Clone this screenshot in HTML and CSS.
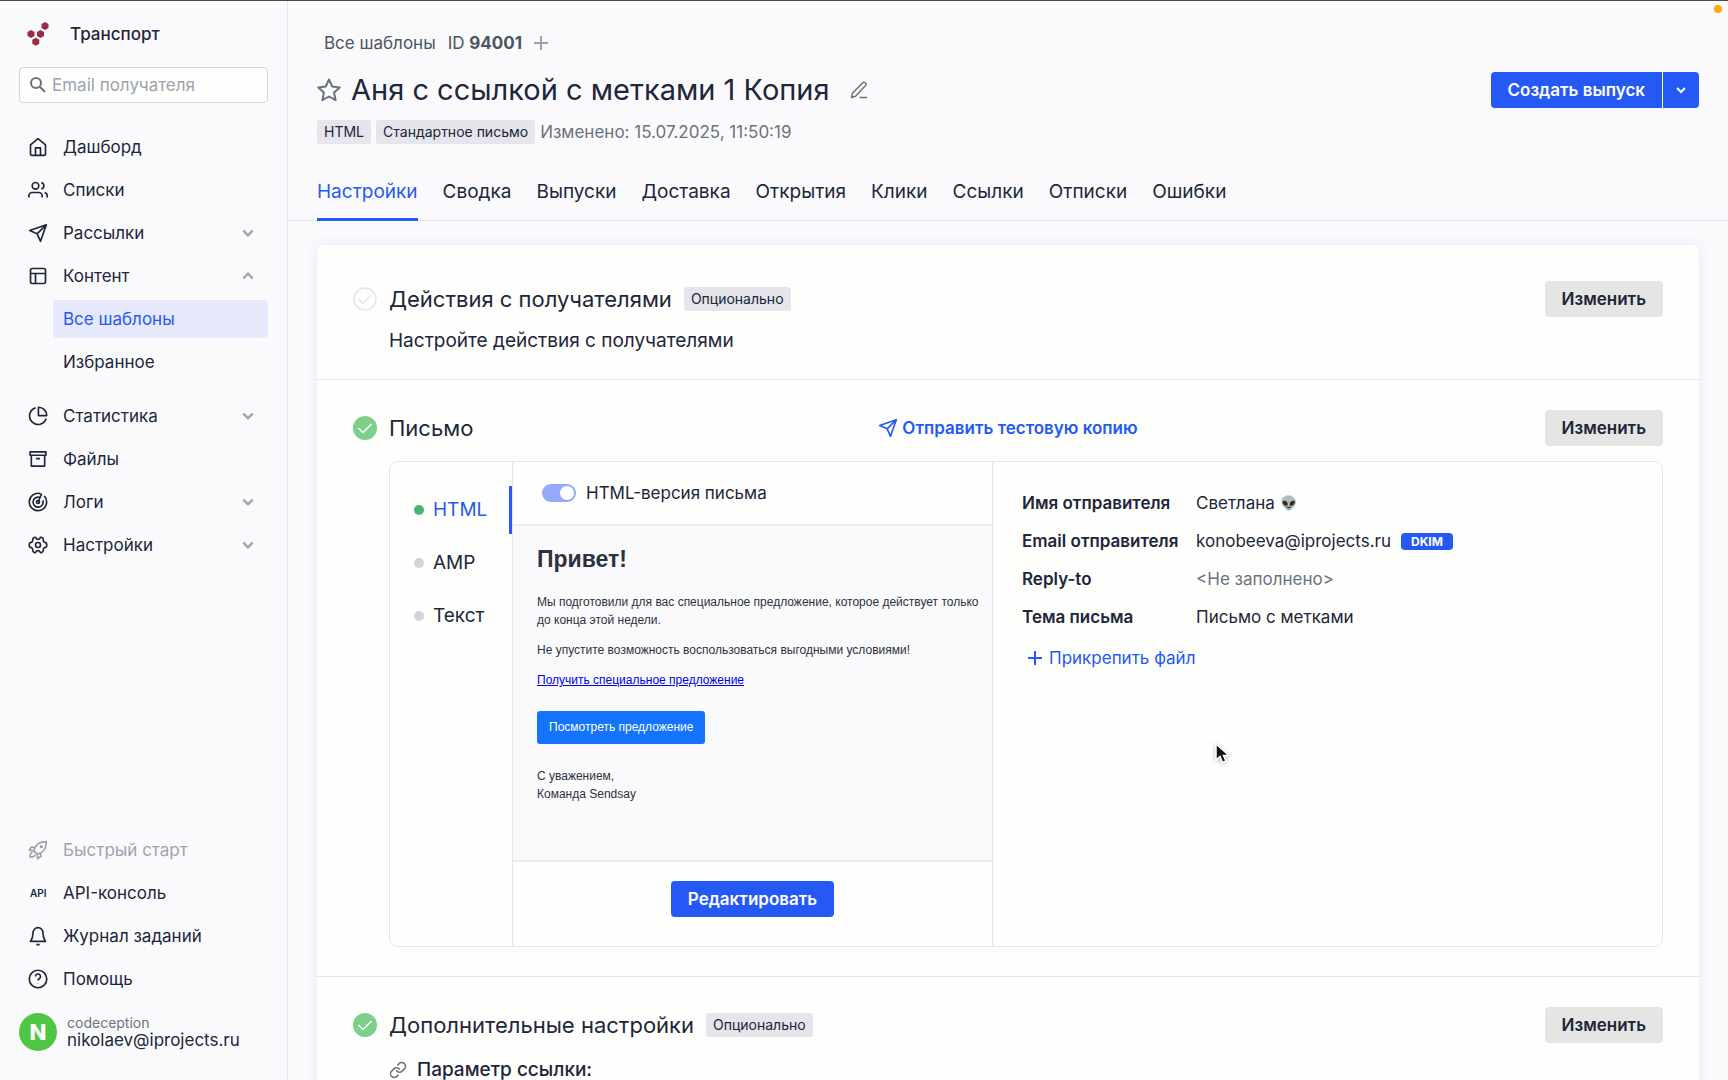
FILE: index.html
```html
<!DOCTYPE html>
<html lang="ru">
<head>
<meta charset="utf-8">
<meta name="viewport" content="width=device-width, initial-scale=1">
<title>Аня с ссылкой с метками 1 Копия</title>
<link rel="stylesheet" href="styles.css">
</head>
<body>
<div class="app">
  <aside class="sidebar">
    <a class="brand" href="#">
      <svg class="logo" width="24" height="24" viewBox="0 0 24 24" fill="#9d2a45" aria-hidden="true"><path d="M18 0l3.500 2v4L18 8l-3.500-2V2zM4 8l3.500 2v4L4 16l-3.500-2v-4zM13.500 8l3.500 2v4l-3.500 2-3.500-2v-4zM8.800 15.700l3.500 2v4l-3.500 2-3.500-2v-4z"/></svg>
      <span>Транспорт</span>
    </a>
    <label class="search">
      <svg width="18" height="18" viewBox="0 0 18 18" fill="none" stroke="#6b7280" stroke-width="2" aria-hidden="true"><circle cx="7" cy="7" r="5"/><path d="M10.800 10.800l5.200 5.200"/></svg>
      <input type="search" placeholder="Email получателя" aria-label="Email получателя">
    </label>
    <nav class="nav" aria-label="Основное меню">
      <a class="nav-item" href="#"><svg class="icon" viewBox="0 0 24 24"><path d="M3 9.500L12 2l9 7.500V20a2 2 0 0 1-2 2H5a2 2 0 0 1-2-2z"/><path d="M9 22v-9h6v9"/></svg>Дашборд</a>
      <a class="nav-item" href="#"><svg class="icon" viewBox="0 0 24 24"><circle cx="9" cy="7" r="4"/><path d="M1 21v-2a4 4 0 0 1 4-4h8a4 4 0 0 1 4 4v2M23 21v-2a4 4 0 0 0-3-3.870M16 3.130a4 4 0 0 1 0 7.750"/></svg>Списки</a>
      <a class="nav-item" href="#"><svg class="icon" viewBox="0 0 24 24"><path d="M22 2L11 13M22 2l-7 20-4-9-9-4z"/></svg>Рассылки<svg class="chevron" viewBox="0 0 12 12"><path d="M2 4l4 4 4-4"/></svg></a>
      <a class="nav-item" href="#"><svg class="icon" viewBox="0 0 24 24"><rect x="3" y="3" width="18" height="18" rx="2"/><path d="M3 9h18M9 9v12"/></svg>Контент<svg class="chevron" viewBox="0 0 12 12"><path d="M2 8l4-4 4 4"/></svg></a>
      <div class="subnav">
        <a class="sub-item active" href="#" aria-current="page">Все шаблоны</a>
        <a class="sub-item" href="#">Избранное</a>
      </div>
      <a class="nav-item" href="#"><svg class="icon" viewBox="0 0 24 24"><path d="M9 2.200A10.200 10.200 0 1 0 21.800 15"/><path d="M12.500 1.500v10h10a10 10 0 0 0-10-10z"/></svg>Статистика<svg class="chevron" viewBox="0 0 12 12"><path d="M2 4l4 4 4-4"/></svg></a>
      <a class="nav-item" href="#"><svg class="icon" viewBox="0 0 24 24"><path d="M2.500 3.500h19v4h-19zM4 7.500h16v13H4zM9.500 11.500h5"/></svg>Файлы</a>
      <a class="nav-item" href="#"><svg class="icon" viewBox="0 0 24 24"><path d="M19.500 4.800A10.400 10.400 0 1 1 15 2M19.500 4.800a10.400 10.400 0 0 1 2.400 4M14 6.500a6 6 0 1 0 3.700 3.500M12 12l4.500-10"/><circle cx="12" cy="12" r="1.800"/></svg>Логи<svg class="chevron" viewBox="0 0 12 12"><path d="M2 4l4 4 4-4"/></svg></a>
      <a class="nav-item" href="#"><svg class="icon" viewBox="0 0 24 24"><circle cx="12" cy="12" r="3"/><path d="M9.400 3.500a2.800 2.800 0 0 0 5.200 0c.3-1.500 3.700 0 3.700 1.500-.5 2.500.8 3.900 2.700 4.100 2 .2 2 5.600 0 5.800-1.900.2-3.200 1.600-2.700 4.100 0 1.500-3.400 3-3.700 1.500a2.800 2.800 0 0 0-5.200 0c-.3 1.500-3.700 0-3.700-1.500.5-2.500-.8-3.900-2.700-4.100-2-.2-2-5.600 0-5.800C4.900 8.900 6.200 7.500 5.700 5c0-1.500 3.400-3 3.700-1.500z"/></svg>Настройки<svg class="chevron" viewBox="0 0 12 12"><path d="M2 4l4 4 4-4"/></svg></a>
    </nav>
    <nav class="nav nav-bottom" aria-label="Служебное меню">
      <a class="nav-item muted" href="#"><svg class="icon" viewBox="0 0 24 24"><path d="M7 13c1-5 5-11 15-11 0 9-5 14-11 15zM8.500 9L4 8.500 1.500 12l5.500 1M15 15.500l.5 4-4 3-.5-5.500M5.500 14.500c-2 0-3 2-3 6 4 0 6-1 6-3"/><circle cx="16" cy="8" r="1"/></svg>Быстрый старт</a>
      <a class="nav-item" href="#"><span class="api">API</span>API-консоль</a>
      <a class="nav-item" href="#"><svg class="icon" viewBox="0 0 24 24"><path d="M18 8.500a6 6.500 0 0 0-12 0c0 6-1.500 8-3 10h18c-1.500-2-3-4-3-10zM10 22.300h4"/></svg>Журнал заданий</a>
      <a class="nav-item" href="#"><svg class="icon" viewBox="0 0 24 24"><circle cx="12" cy="12" r="10.500"/><path d="M9 9a3 3 0 1 1 4.500 2.600c-1 .6-1.500 1-1.500 2.100M12 17v.5"/></svg>Помощь</a>
    </nav>
    <a class="account" href="#">
      <span class="avatar">N</span>
      <span class="account-text"><span class="account-name">codeception</span><span class="account-mail">nikolaev@iprojects.ru</span></span>
    </a>
  </aside>

  <main class="main">
    <header class="page-head">
      <div class="crumbs">
        <a href="#">Все шаблоны</a>
        <span>ID <b>94001</b></span>
        <button class="plain" type="button" aria-label="Добавить"><svg width="14" height="14" viewBox="0 0 14 14" fill="none" stroke="#9ca3af" stroke-width="2"><path d="M7 0v14M0 7h14"/></svg></button>
      </div>
      <div class="title-row">
        <button class="plain" type="button" aria-label="В избранное"><svg width="24" height="24" viewBox="0 0 24 24" fill="none" stroke="#6b7280" stroke-width="2" stroke-linejoin="round"><path d="M12 1.500l3.200 7 7.500.9-5.600 5.200 1.500 7.600L12 18.500l-6.600 3.700 1.500-7.600L1.300 9.400l7.500-.9z"/></svg></button>
        <h1>Аня с ссылкой с метками 1 Копия</h1>
        <button class="plain edit" type="button" aria-label="Переименовать"><svg width="18" height="18" viewBox="0 0 18 18" fill="none" stroke="#6b7280" stroke-width="1.500" stroke-linejoin="round"><path d="M1.500 16.500l1-4.200L12.500 2a1.900 1.900 0 0 1 3 2.500L5.500 15.300zM9.500 16.500H17"/></svg></button>
        <div class="split">
          <button class="btn primary" type="button">Создать выпуск</button>
          <button class="btn primary more" type="button" aria-label="Ещё"><svg width="12" height="12" viewBox="0 0 12 12" fill="none" stroke="#fff" stroke-width="2"><path d="M2 4l4 4 4-4"/></svg></button>
        </div>
      </div>
      <div class="meta">
        <span class="tag">HTML</span><span class="tag">Стандартное письмо</span><span>Изменено: 15.07.2025, 11:50:19</span>
      </div>
      <nav class="tabs" aria-label="Разделы шаблона">
        <a class="active" href="#" aria-current="page">Настройки</a><a href="#">Сводка</a><a href="#">Выпуски</a><a href="#">Доставка</a><a href="#">Открытия</a><a href="#">Клики</a><a href="#">Ссылки</a><a href="#">Отписки</a><a href="#">Ошибки</a>
      </nav>
    </header>

    <div class="card">
      <section class="section">
        <div class="section-head">
          <div class="heading">
            <svg class="status" viewBox="0 0 24 24" fill="none" stroke="#e4e4ea" stroke-width="1.500"><circle cx="12" cy="12" r="11"/><path d="M5.500 12l4.500 4.500 8.500-8.500"/></svg>
            <h2>Действия с получателями</h2><span class="tag">Опционально</span>
          </div>
          <span></span>
          <button class="btn gray" type="button">Изменить</button>
        </div>
        <p class="lead">Настройте действия с получателями</p>
      </section>

      <section class="section letter">
        <div class="section-head">
          <div class="heading">
            <svg class="status" viewBox="0 0 24 24" fill="none" stroke="#fff" stroke-width="1.500"><circle cx="12" cy="12" r="12" fill="#7dd08a" stroke="none"/><path d="M5.500 12l4.500 4.500 8.500-8.500"/></svg>
            <h2>Письмо</h2>
          </div>
          <a class="send-test" href="#"><svg width="20" height="20" viewBox="0 0 24 24" fill="none" stroke="currentColor" stroke-width="2" stroke-linejoin="round"><path d="M22 2L11 13M22 2l-7 20-4-9-9-4z"/></svg>Отправить тестовую копию</a>
          <button class="btn gray" type="button">Изменить</button>
        </div>
        <div class="letter-box">
          <nav class="versions" aria-label="Версии письма">
            <a class="active" href="#" aria-current="true">HTML</a><a href="#">AMP</a><a href="#">Текст</a>
          </nav>
          <div class="preview">
            <label class="toggle"><input type="checkbox" role="switch" checked>HTML-версия письма</label>
            <article class="mail">
              <h3>Привет!</h3>
              <p>Мы подготовили для вас специальное предложение, которое действует только до конца этой недели.</p>
              <p>Не упустите возможность воспользоваться выгодными условиями!</p>
              <p><a href="#">Получить специальное предложение</a></p>
              <a class="mail-btn" href="#">Посмотреть предложение</a>
              <p>С уважением,<br>Команда Sendsay</p>
            </article>
            <div class="preview-foot"><button class="btn primary" type="button">Редактировать</button></div>
          </div>
          <div class="details">
            <dl>
              <dt>Имя отправителя</dt><dd>Светлана <span class="emoji">👽</span></dd>
              <dt>Email отправителя</dt><dd>konobeeva@iprojects.ru <span class="dkim">DKIM</span></dd>
              <dt>Reply-to</dt><dd class="empty">&lt;Не заполнено&gt;</dd>
              <dt>Тема письма</dt><dd>Письмо с метками</dd>
            </dl>
            <button class="plain attach" type="button"><svg width="14" height="14" viewBox="0 0 14 14" fill="none" stroke="currentColor" stroke-width="2"><path d="M7 0v14M0 7h14"/></svg>Прикрепить файл</button>
          </div>
        </div>
      </section>

      <section class="section">
        <div class="section-head">
          <div class="heading">
            <svg class="status" viewBox="0 0 24 24" fill="none" stroke="#fff" stroke-width="1.500"><circle cx="12" cy="12" r="12" fill="#7dd08a" stroke="none"/><path d="M5.500 12l4.500 4.500 8.500-8.500"/></svg>
            <h2>Дополнительные настройки</h2><span class="tag">Опционально</span>
          </div>
          <span></span>
          <button class="btn gray" type="button">Изменить</button>
        </div>
        <p class="lead strong"><svg width="18" height="18" viewBox="0 0 24 24" fill="none" stroke="#6b7280" stroke-width="2" stroke-linecap="round"><path d="M10 13a5 5 0 0 0 7.540.540l3-3a5 5 0 0 0-7.070-7.070l-1.720 1.710"/><path d="M14 11a5 5 0 0 0-7.540-.540l-3 3a5 5 0 0 0 7.070 7.070l1.710-1.710"/></svg>Параметр ссылки:</p>
      </section>
    </div>
  </main>
</div>
<span class="rec-dot"></span>
<svg class="pointer" width="17" height="24" viewBox="0 0 17 24" aria-hidden="true"><path d="M2 2v16l4-3.500 2.500 6 3.500-1.500-2.500-5.500h5.500z" fill="#111" stroke="#fff" stroke-width="1.500"/></svg>
</body>
</html>
```
FILE: styles.css
```css
:root {
  --ink: #20263a;
  --muted: #6b7280;
  --faint: #9ca3af;
  --blue: #2459f5;
  --line: #e5e5ee;
  --bg: #fafafd;
  --paper: #fefefd;
}

* { box-sizing: border-box; }

body {
  margin: 0;
  font: 17px/24px Inter, sans-serif;
  color: var(--ink);
  background: var(--bg);
}

a { color: inherit; text-decoration: none; }
button, input { font: inherit; color: inherit; }
h1, h2, p, dl, dd { margin: 0; font-weight: 400; }

.app {
  display: flex;
  height: 100vh;
  overflow: hidden;
  border-top: 1px solid #4b4950;
}

/* Sidebar */
.sidebar {
  display: flex;
  flex-direction: column;
  flex: none;
  width: 288px;
  padding: 20px 19px 29px 19px;
  border-right: 1px solid var(--line);
}

.brand {
  display: flex;
  align-items: center;
  gap: 19px;
  padding-left: 8px;
  height: 26px;
  font-weight: 500;
}

.search {
  display: flex;
  align-items: center;
  gap: 5px;
  height: 36px;
  margin-top: 20px;
  padding: 0 9px;
  background: var(--paper);
  border: 1px solid #d1d5db;
  border-radius: 4px;
}

.search svg { flex: none; }

.search input {
  width: 100%;
  min-width: 0;
  padding: 0;
  border: 0;
  outline: 0;
  background: none;
}

.search input::placeholder { color: var(--faint); opacity: 1; }

.nav {
  display: flex;
  flex-direction: column;
  gap: 5px;
  margin-top: 25px;
}

.nav-bottom { margin-top: auto; }

.nav-item {
  display: flex;
  align-items: center;
  height: 38px;
  padding: 0 13px 0 9px;
}

.nav-item.muted { color: var(--faint); }

.icon {
  width: 20px;
  height: 20px;
  margin-right: 15px;
  fill: none;
  stroke: currentColor;
  stroke-width: 2;
  stroke-linejoin: round;
}

.api {
  width: 35px;
  font-size: 10px;
  font-weight: 600;
  padding-left: 2px;
}

.chevron {
  width: 14px;
  height: 14px;
  margin-left: auto;
  fill: none;
  stroke: var(--faint);
  stroke-width: 2;
}

.subnav {
  display: flex;
  flex-direction: column;
  gap: 5px;
  margin: 0 0 11px 34px;
}

.sub-item {
  height: 38px;
  padding: 0 10px;
  line-height: 38px;
  border-radius: 4px;
}

.sub-item.active { color: var(--blue); background: #e6e9fc; }

.account {
  display: flex;
  align-items: center;
  gap: 10px;
  margin-top: 15px;
}

.avatar {
  width: 38px;
  height: 38px;
  border-radius: 50%;
  background: #50c644;
  color: #fff;
  font-size: 22px;
  font-weight: 800;
  line-height: 38px;
  text-align: center;
}

.account-text { display: flex; flex-direction: column; }
.account-name { font-size: 14px; line-height: 16px; color: var(--muted); }
.account-mail { line-height: 18px; }

/* Page header */
.main { flex: 1; min-width: 0; }

.page-head {
  padding: 30px 29px 0;
  border-bottom: 1px solid var(--line);
}

.plain {
  display: flex;
  align-items: center;
  padding: 0;
  border: 0;
  background: none;
}

.crumbs {
  display: flex;
  align-items: center;
  gap: 12px;
  padding-left: 7px;
  color: #4b5563;
}

.title-row {
  display: flex;
  align-items: center;
  margin-top: 17px;
}

h1 {
  margin: 0 20px 0 10px;
  font-size: 29px;
  line-height: 36px;
}

.split { display: flex; gap: 1px; margin-left: auto; }

.btn {
  height: 36px;
  padding: 0 17px;
  border: 0;
  border-radius: 4px;
  font-weight: 600;
  line-height: 36px;
}

.btn.primary { color: #fff; background: var(--blue); }
.btn.gray { color: var(--ink); background: #e5e5e4; }
.split .btn:first-child { border-radius: 4px 0 0 4px; }
.split .more { padding: 0 12px; border-radius: 0 4px 4px 0; }

.meta {
  display: flex;
  align-items: center;
  gap: 5px;
  margin-top: 12px;
  color: var(--muted);
}

.tag {
  padding: 0 7px;
  font-size: 14px;
  line-height: 24px;
  color: var(--ink);
  background: #e5e5eb;
  border-radius: 3px;
}

.tabs {
  display: flex;
  gap: 25px;
  margin: 32px 0 -1px;
  font-size: 19px;
}

.tabs a { padding: 4px 0 14px; border-bottom: 3px solid transparent; }
.tabs .active { color: var(--blue); border-color: var(--blue); }

/* Card */
.card {
  margin: 24px 29px 0;
  background: var(--paper);
  border-radius: 6px;
  box-shadow: 0 0 12px #e4e7f2;
}

.section { padding: 36px 36px 24px; border-bottom: 1px solid #e2e2e4; }
.section.letter { padding: 30px 36px 29px; }
.section:last-child { padding-top: 30px; border-bottom: 0; }

.section-head {
  display: grid;
  grid-template-columns: 1fr auto 1fr;
  align-items: center;
}

.section-head .btn { justify-self: end; }
.heading { display: flex; align-items: center; }
.status { width: 24px; height: 24px; margin-right: 12px; }
h2 { margin-right: 12px; font-size: 22px; line-height: 30px; white-space: nowrap; }

.lead { padding: 12px 0 2px 36px; font-size: 19px; }
.lead.strong { display: flex; align-items: center; gap: 10px; padding-top: 15px; font-weight: 500; }

.send-test {
  display: flex;
  align-items: center;
  gap: 4px;
  color: var(--blue);
  font-weight: 600;
}

.letter-box {
  display: grid;
  grid-template-columns: 123px 480px 1fr;
  margin: 15px 0 0 36px;
  border: 1px solid var(--line);
  border-radius: 8px;
}

.versions {
  display: flex;
  flex-direction: column;
  gap: 5px;
  padding-top: 24px;
  border-right: 1px solid var(--line);
  font-size: 19px;
}

.versions a {
  display: flex;
  align-items: center;
  gap: 9px;
  height: 48px;
  padding-left: 24px;
  border-right: 3px solid transparent;
}

.versions a::before {
  content: "";
  width: 10px;
  height: 10px;
  border-radius: 50%;
  background: #d1d5db;
}

.versions .active { color: var(--blue); border-color: var(--blue); }
.versions .active::before { background: #44b773; }

.preview { border-right: 1px solid var(--line); }

.toggle {
  display: flex;
  align-items: center;
  gap: 10px;
  height: 62px;
  padding-left: 29px;
}

.toggle input {
  appearance: none;
  width: 34px;
  height: 18px;
  margin: 0;
  padding: 2px;
  border-radius: 9px;
  background: #93a9fc;
}

.toggle input::before {
  content: "";
  display: block;
  width: 14px;
  height: 14px;
  margin-left: auto;
  border-radius: 50%;
  background: #fff;
}

.mail {
  height: 338px;
  padding: 20px 12px 0 24px;
  border: solid #ececf3;
  border-width: 2px 0;
  background: var(--bg);
  color: #2d3140;
  font: 12px/18px "Liberation Sans", Arial, sans-serif;
}

.mail h3 { margin: 0 0 21px; font-size: 23px; line-height: 26px; }
.mail p { margin-bottom: 12px; }
.mail p a { color: #00e; text-decoration: underline; }

.mail-btn {
  display: inline-block;
  margin: 10px 0 23px;
  padding: 0 12px;
  line-height: 33px;
  color: #fff;
  background: #1473ff;
  border-radius: 3px;
}

.preview-foot {
  display: flex;
  justify-content: center;
  padding: 19px 0 29px;
}

.details { padding: 29px; }

dl {
  display: grid;
  grid-template-columns: 174px 1fr;
  row-gap: 14px;
}

dt { font-weight: 600; }
dd { display: flex; align-items: center; height: 24px; }
.empty { color: var(--muted); }
.emoji { margin-left: 5px; font-size: 14px; }

.dkim {
  margin-left: 10px;
  padding: 0 10px;
  font-size: 12px;
  font-weight: 700;
  line-height: 17px;
  color: #fff;
  background: var(--blue);
  border-radius: 4px;
}

.attach { gap: 7px; margin: 17px 0 0 6px; color: var(--blue); }

/* Overlays */
.rec-dot {
  position: absolute;
  top: 5px;
  right: 6px;
  width: 8px;
  height: 8px;
  border-radius: 50%;
  background: #ffa70a;
}

.pointer {
  position: absolute;
  left: 1214px;
  top: 742px;
  filter: drop-shadow(0 1px 2px #8888);
}
```
